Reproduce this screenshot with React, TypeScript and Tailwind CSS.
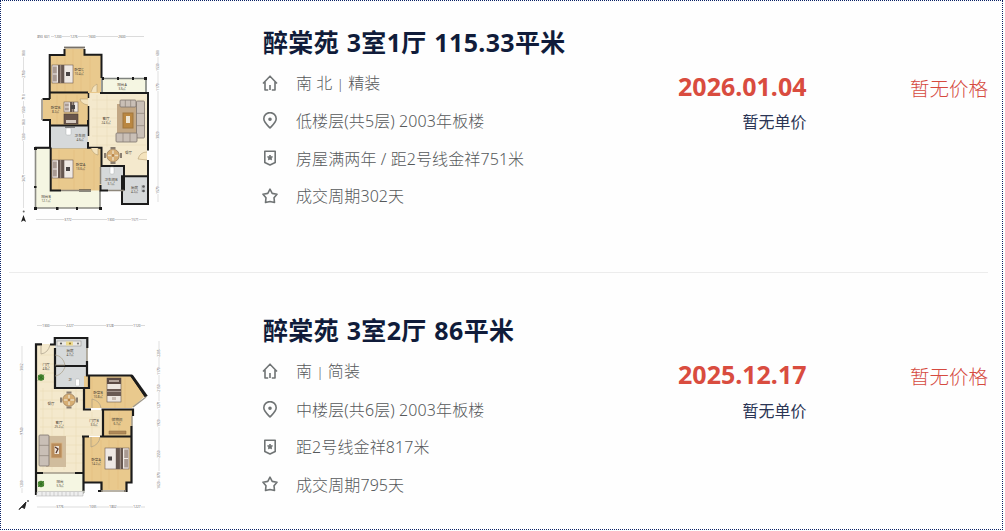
import type { ReactNode } from "react";

interface Listing { id: number; title: string; orient: string; decor: string; floor: string; tag: string; cycle: string; date: string; plan: ReactNode }

const WALL = "#1b1b1b";
const WOOD = "#e9c98d";
const TILE = "#d6d9da";
const LIVING = "#f4e9cd";
const BALCONY = "#f5f6e2";

function Label({ x, y, name, area }: { x: number; y: number; name: string; area: string }) {
  return (
    <g fontSize="3.6" fill="#4b4336" textAnchor="middle">
      <text x={x} y={y}>{name}</text>
      <text x={x} y={y + 4} fontSize="3">{area}</text>
    </g>
  );
}

function Bed({ x, y, w = 21, h = 18, flip = false }: { x: number; y: number; w?: number; h?: number; flip?: boolean }) {
  return (
    <g transform={flip ? `translate(${2 * x + w} 0) scale(-1 1)` : undefined}>
      <rect x={x} y={y} width={w} height={h} fill="#efe9e4" stroke="#6f5c50" strokeWidth="0.6" />
      <rect x={x + 0.8} y={y + 1.5} width={4} height={h / 2 - 2} fill="#a99a92" />
      <rect x={x + 0.8} y={y + h / 2 + 0.5} width={4} height={h / 2 - 2} fill="#a99a92" />
      <rect x={x + 6} y={y} width={w * 0.3} height={h} fill="#665750" />
      <rect x={x + 8} y={y} width={1.2} height={h} fill="#9b8b82" />
      <rect x={x + w - 7} y={y + h / 2 - 2} width={4} height={4} fill="#4a4545" />
    </g>
  );
}

function Sofa({ x, y, w, h }: { x: number; y: number; w: number; h: number }) {
  const tall = h > w;
  return (
    <g>
      <rect x={x} y={y} width={w} height={h} rx="1" fill="#c9bfb6" stroke="#7d746d" strokeWidth="0.8" />
      {[1, 2].map((i) => tall
        ? <path key={i} d={`M${x} ${y + (h * i) / 3}h${w}`} stroke="#8d8279" strokeWidth="0.7" />
        : <path key={i} d={`M${x + (w * i) / 3} ${y}v${h}`} stroke="#8d8279" strokeWidth="0.7" />)}
    </g>
  );
}

function Dining({ x, y }: { x: number; y: number }) {
  return (
    <g>
      <path d={`M${x - 2.5} ${y - 7.5}h5M${x - 2.5} ${y + 7.5}h5M${x - 8} ${y - 2.5}v5M${x + 8} ${y - 2.5}v5`} stroke="#8a7e70" strokeWidth="2" />
      <circle cx={x} cy={y} r="6.3" fill="#d6ad72" stroke="#94795a" strokeWidth="0.7" />
      <path d={`M${x - 5} ${y}h10M${x} ${y - 5}v10`} stroke="#e9d9bb" strokeWidth="1.6" />
      <circle cx={x} cy={y} r="1.4" fill="#b68143" />
    </g>
  );
}

// dimension line with small gaps where the measures stand
function HDim({ y, from, to, marks }: { y: number; from: number; to: number; marks: [number, string][] }) {
  return (
    <g>
      <path d={`M${from} ${y}H${to}`} stroke="#b9b9b9" strokeWidth="0.5" />
      {marks.map(([x, t]) => (
        <g key={x}>
          <rect x={x - 4} y={y - 1.5} width="8" height="3" fill="#fefefe" />
          <text x={x} y={y + 1.2} fontSize="3.2" textAnchor="middle" fill="#666">{t}</text>
        </g>
      ))}
    </g>
  );
}

function VDim({ x, from, to, marks }: { x: number; from: number; to: number; marks: [number, string][] }) {
  return (
    <g>
      <path d={`M${x} ${from}V${to}`} stroke="#c2c2c2" strokeWidth="0.5" />
      {marks.map(([y, t]) => (
        <g key={y} transform={`rotate(-90 ${x} ${y})`}>
          <rect x={x - 4} y={y - 1.5} width="8" height="3" fill="#fefefe" />
          <text x={x} y={y + 1.2} fontSize="3.2" textAnchor="middle" fill="#666">{t}</text>
        </g>
      ))}
    </g>
  );
}

function PlanA() {
  return (
    <svg viewBox="10 24 160 206" className="h-[206px] w-[160px] shrink-0">
      <HDim y={36.5} from={38} to={144} marks={[[40, "890"], [47, "601"], [58, "1200"], [74, "1276"], [92, "1600"], [122, "2600"]]} />
      <HDim y={219.5} from={36} to={147} marks={[[68, "3772"], [111, "1300"], [135, "1571"]]} />
      <VDim x={23.5} from={50} to={208} marks={[[53, "800"], [74, "2700"], [97, "710"], [110, "1500"], [122, "860"], [137, "1200"], [178, "3671"]]} />
      <VDim x={158} from={50} to={202} marks={[[53, "680"], [67, "1530"], [87, "1170"], [135, "3820"], [190, "1570"]]} />
      {/* balconies */}
      <path d="M35.5 148H100v60H35.5z" fill={BALCONY} stroke="#8b8b84" strokeWidth="1.6" />
      <path d="M102 78.5H146V93H102z" fill={BALCONY} stroke="#7f837e" strokeWidth="1.6" />
      {/* rooms */}
      <path d="M65 48.5H84V55H101V93H50V55H65z" fill={WOOD} />
      <path d="M50 93H88V125H50V120H43V99H50z" fill={WOOD} />
      <path d="M88 93H147V176H124V166H101V148H88z" fill={LIVING} />
      <path d="M51 126H88V148H51z" fill={TILE} />
      <path d="M51 148.5H101V190.5H51z" fill={WOOD} />
      <path d="M101 167H124V190H101zM123 177H147V203H123z" fill={TILE} />
      <path d="M57 57V92M65 49V92M73 49V92M81 49V92M90 57V92M57 95V124M66 95V124M77 95V124M59 150V190M74 150V190M84 150V190M94 150V190" stroke="#d9ad67" strokeWidth="0.4" opacity="0.6" />
      <path d="M92 100H146M92 109H146M92 118H146M92 127H146M92 136H146M92 145H146M97 95V147M107 95V147" stroke="#e6d7b4" strokeWidth="0.4" />
      {/* walls */}
      <path d="M64.5 49V55H49.7V92.5H88M84.5 49V54.7H101.5V78M49.7 92V99M42.5 99H50M42.5 120H50V147.8H35M100 93H148V150.5M148 160V204H122V176.3H148M50.7 147.5V190.5H61M79 190.5H91M88 142V147.7H101.5V166H124V190.5M100.5 185V190.5H108M50 125.5H88V120" fill="none" stroke={WALL} strokeWidth="2" />
      <path d="M64 47.5H85" stroke="#77716a" strokeWidth="1.8" />
      <path d="M42 99V120M61 190.5H91M100.5 167V184M108 190.5H124" stroke="#8e877b" strokeWidth="1.5" />
      <path d="M88.5 93V98M88.5 106V136" stroke={WALL} strokeWidth="1.5" />
      <path d="M34 147H37V150H34zM34 207H37V210H34zM56 207H58.5V210H56zM76 207H78V210H76zM99 207H102V210H99zM34 186H36.5V188H34zM102 77H104V80H102zM117 77H119V80H117zM132 77H134V80H132zM144 77H147V80H144z" fill={WALL} />
      <path d="M97 92V84Q92 86 91 92M88 99H80Q81 104 88 105M98 148V155Q93 154 91 148M147 152Q140 152 138 159L147 160" fill="#f4e3bd" stroke="#b69d72" strokeWidth="0.6" />
      <Bed x={52} y={65} />
      <Bed x={52} y={160} />
      <Bed x={64} y={102} w={14} h={10} />
      <rect x={64} y={114} width={14} height={10} fill="#69554b" stroke="#4b3d36" strokeWidth="0.6" />
      <rect x={66} y={120} width={10} height={3} fill="#d4c9bf" />
      <rect x={117} y={104} width={25} height={34} fill="#c2a784" />
      <Sofa x={120} y={100} w={16} h={7} />
      <Sofa x={136.5} y={101} w={8} h={37} />
      <Sofa x={116} y={133} w={21} h={9} />
      <rect x={123} y={113} width={10} height={15} fill="#ba8741" stroke="#a0763d" strokeWidth="1" />
      <rect x={126} y={116} width={4} height={7} fill="#eee5d1" />
      <Dining x={113} y={155.5} />
      <rect x={66} y={128} width={5} height={7} rx="1" fill="#fff" stroke="#a0a4a5" strokeWidth="0.4" />
      <path d="M65 127H75" stroke="#666" strokeWidth="1.5" />
      <rect x={110} y={167} width={4} height={7} rx="1" fill="#fff" stroke="#a0a4a5" strokeWidth="0.4" />
      <path d="M141 185h4v7h-4z" fill="#c3c7c9" /><circle cx="143.5" cy="186.5" r="1.3" fill="#59595a" /><circle cx="143.5" cy="191" r="1.3" fill="#59595a" />
      <Label x={79} y={70.5} name="卧室C" area="10.4㎡" />
      <Label x={55.5} y={108.5} name="卧室B" area="8.2㎡" />
      <Label x={122} y={85.5} name="阳台A" area="3.6㎡" />
      <Label x={106} y={120} name="客厅" area="24.3㎡" />
      <Label x={80} y={136.5} name="卫生间" area="4.6㎡" />
      <Label x={80.5} y={166} name="卧室A" area="13.6㎡" />
      <Label x={111} y={181} name="卫生间B" area="3.1㎡" />
      <Label x={134.5} y={188.5} name="厨房" area="4.2㎡" />
      <Label x={46} y={198} name="阳台B" area="12.1㎡" />
      <text x="128.5" y="154" fontSize="3.5" textAnchor="middle" fill="#4b4336">餐厅</text>
      <path d="M23.5 215L26 222L23.5 220.5L21 222z" fill="#222" /><circle cx="23.7" cy="211.5" r="1" fill="#666" />
    </svg>
  );
}

function PlanB() {
  return (
    <svg viewBox="10 312 160 206" className="h-[206px] w-[160px] shrink-0">
      <HDim y={325.5} from={37} to={145} marks={[[46, "1300"], [70, "2227"], [110, "3128"], [137, "1120"]]} />
      <HDim y={507} from={37} to={145} marks={[[60, "3776"], [93, "1035"], [113, "1802"], [137, "1227"]]} />
      <VDim x={22} from={346} to={493} marks={[[367, "3062"], [431, "9740"], [484, "1200"]]} />
      <VDim x={159} from={341} to={488} marks={[[353, "2205"], [371, "1170"], [388, "2150"], [405, "1271"], [423, "1920"], [454, "2550"], [475, "870"], [485, "1020"]]} />
      {/* rooms */}
      <path d="M37 344H55V387H84V410H103V436H84V473H37z" fill={LIVING} />
      <path d="M55 339H87V387H55z" fill={TILE} />
      <path d="M84 376H132L145 396L132 408H84z" fill={WOOD} />
      <path d="M103 409H132V436H103z" fill={WOOD} />
      <path d="M84 437H132V483H126V490H101V483H84z" fill={WOOD} />
      <path d="M37 473H84V492H37z" fill={BALCONY} />
      <path d="M40 355H54M40 364H54M40 373H54M40 382H54M40 391H83M40 400H83M40 409H83M40 418H100M40 427H100M40 436H83M40 445H83M40 454H83M40 463H83M43 388V470M52 388V470M64 388V470M76 388V470M92 412V434" stroke="#e8d8b3" strokeWidth="0.5" />
      <path d="M92 378V408M115 378V408M125 378V408M110 412V435M119 412V435M92 440V482M101 440V489M109 440V489M118 440V489" stroke="#d9ad67" strokeWidth="0.4" opacity="0.6" />
      {/* walls */}
      <path d="M42 344.3H36V495M50 344.5H54.8V338H87.3V348M87 361V375.5H131.5L145.5 396.5M55 366H87M55 348V388H89V376M84 388V409.5H91M101.5 409.5H133V416M103 409V436M131.5 426V482.5H126.5V491H124M83.5 436V491M82 436.5H89M100 436.5H132M84 482.5H101.5V491H98" fill="none" stroke={WALL} strokeWidth="2.2" />
      <path d="M131.5 375.5L146.5 396.5" stroke={WALL} strokeWidth="3" />
      <path d="M36 473H43M75 473H84" stroke={WALL} strokeWidth="1.8" />
      <path d="M87 348V361M132 416V426M101 491H126M43 473H75M146 397L133 407" stroke="#a19989" strokeWidth="1.5" />
      <path d="M36 493H84V490" fill="none" stroke="#8e9189" strokeWidth="1" />
      <path d="M38 491.5H83V496H36" fill="#eee" stroke="#aaa" strokeWidth="0.5" />
      <path d="M42 492V496M46 492V496M50 492V496M54 492V496M58 492V496M62 492V496M66 492V496M70 492V496M74 492V496M78 492V496" stroke="#b5b5b5" strokeWidth="0.6" />
      <path d="M41 345V354Q48 353 50 345M55 355Q63 356 65 365H55M55 376Q62 375 65 367M92 408V399Q100 401 101 408M91 437V447Q99 445 100 437" fill="none" stroke="#a99d86" strokeWidth="0.7" />
      <rect x={57} y={341} width={24} height={5} fill="#eceae5" stroke="#888" strokeWidth="0.5" />
      <rect x={66} y={341.5} width={7} height={4} fill="#eddb91" />
      <circle cx="61" cy="343.5" r="1.1" fill="#555" /><circle cx="70" cy="343.5" r="1.1" fill="#997d2c" /><circle cx="78" cy="343.5" r="1.1" fill="#777" />
      <rect x={75.5} y={379} width={4} height={7} rx="1" fill="#fff" stroke="#a0a4a5" strokeWidth="0.4" />
      <Dining x={69} y={400} />
      <rect x={107} y={378} width={14} height={24} fill="#eee7df" stroke="#6a5a50" strokeWidth="0.6" />
      <rect x={107} y={378} width={14} height={6} fill="#5c4b44" />
      <rect x={109} y={380} width={10} height={2} fill="#b3a49a" />
      <rect x={107} y={389} width={14} height={7} fill="#6a5a53" /><path d="M107 391.5h14" stroke="#a3948c" />
      <rect x={112} y={397} width={4} height={3} fill="#c9bcb2" />
      <Bed x={105} y={448} w={24} h={21} flip />
      <path d="M109 431H126V434H109z" fill="#b18a59" stroke="#8b6b42" strokeWidth="0.5" />
      <rect x={46} y={436} width={20} height={31} fill="#d0bc9d" />
      <Sofa x={39} y={435} w={10} h={31} />
      <rect x={51} y={443} width={11} height={15} fill="#b98c5b" stroke="#d6b587" strokeWidth="0.8" />
      <rect x={54.5} y={446} width={4.5} height={8} fill="#eee4d8" /><path d="M55 447l3 2l-2 4" stroke="#54362d" strokeWidth="1.3" fill="none" />
      {[[41, 377.5], [41, 484]].map(([x, y]) => (
        <g key={y}>
          <circle cx={x} cy={y} r="3.2" fill="#518c38" />
          <path d={`M${x - 3} ${y - 2}l6 4M${x + 3} ${y - 3}l-6 6M${x} ${y - 3}v6`} stroke="#2f6d21" strokeWidth="0.8" />
        </g>
      ))}
      <Label x={70} y={352} name="厨房" area="4.7㎡" />
      <Label x={46} y={365.5} name="门厅" area="4.8㎡" />
      <text x="70" y="380.5" fontSize="3.5" textAnchor="middle" fill="#4b4336">卫</text>
      <text x="51" y="405" fontSize="3.5" textAnchor="middle" fill="#4b4336">餐厅</text>
      <Label x={98} y={394} name="卧室B" area="10.8㎡" />
      <Label x={59} y={424} name="客厅" area="25.2㎡" />
      <Label x={94} y={422} name="门厅B" area="3.0㎡" />
      <Label x={117} y={421} name="储物间" area="6.7㎡" />
      <Label x={96} y={461} name="卧室A" area="14.2㎡" />
      <Label x={60} y={483} name="阳台" area="5.9㎡" />
      <path d="M19 509.5L26 502L24.5 508.5L22 507z" fill="#222" stroke="#222" /><circle cx="28" cy="501" r="1" fill="#555" />
    </svg>
  );
}

const listings: Listing[] = [
  { id: 1, title: "醉棠苑 3室1厅 115.33平米", orient: "南 北", decor: "精装", floor: "低楼层(共5层) 2003年板楼", tag: "房屋满两年 / 距2号线金祥751米", cycle: "成交周期302天", date: "2026.01.04", plan: <PlanA /> },
  { id: 2, title: "醉棠苑 3室2厅 86平米", orient: "南", decor: "简装", floor: "中楼层(共6层) 2003年板楼", tag: "距2号线金祥817米", cycle: "成交周期795天", date: "2025.12.17", plan: <PlanB /> },
];

const icons = {
  house: <path d="M1 8.5L8 1.2L15 8.500M3 7V15H6.2M13 7V15H9.8M8 10V15" />,
  pin: <><path d="M8 16C5.5 13.3 1.8 10.2 1.8 6.8A6.2 6.2 0 0 1 14.2 6.8C14.2 10.2 10.5 13.3 8 16z" /><circle cx="8" cy="7.3" r="1" fill="#707475" /></>,
  badge: <><path d="M2.8 1.2H13.2V12.5L8 15L2.8 12.5z" /><path d="M8 5L8.7 6.7L10.5 6.9L9.2 8.1L9.5 9.8L8 8.9L6.5 9.8L6.8 8.1L5.5 6.9L7.3 6.7z" fill="#707475" strokeWidth="1" /></>,
  star: <path d="M8 1.2L10.2 5.4L15 6.2L12 9.7L12.5 14.5L8 13.5L3.5 14.5L4 9.7L1 6.2L5.8 5.4z" />,
};

function Info({ icon, children }: { icon: ReactNode; children: ReactNode }) {
  return (
    <li className="flex h-[37.7px] items-center">
      <svg viewBox="0 0 16 17" className="mr-[18px] h-[17px] w-4 shrink-0" fill="none" stroke="#707475" strokeWidth="1.6" strokeLinejoin="round">{icon}</svg>
      <span className="whitespace-nowrap">{children}</span>
    </li>
  );
}

export default function App() {
  return (
    <div className="h-[531px] w-[1005px] overflow-hidden bg-[#fefefe] font-['Noto_Sans','Noto_Sans_CJK_SC',sans-serif]">
      <ul className="h-[530px] w-[1003px] border border-dotted border-[#0b2265] pr-[14px] pl-2">
        {listings.map((l) => (
          <li key={l.id} className="group flex h-[272px] border-b border-[#ececec] pt-[23px] last:h-[256px] last:border-b-0 last:pt-[39px]">
            <div className="w-[161px] shrink-0 pl-px">{l.plan}</div>
            <div className="ml-[92px] w-[360px] shrink-0">
              <h2 className="ml-px h-[38px] text-[25px] leading-[37px] font-bold tracking-[0.35px] whitespace-nowrap text-[#101c3a] [word-spacing:0.8px]">{l.title}</h2>
              <ul className="mt-[2.4px] text-base leading-6 font-light tracking-[0.1px] text-[#56595b] group-last:mt-[3px]">
                <Info icon={icons.house}>{l.orient} <span className="text-[13px]">|</span> {l.decor}</Info>
                <Info icon={icons.pin}>{l.floor}</Info>
                <Info icon={icons.badge}>{l.tag}</Info>
                <Info icon={icons.star}>{l.cycle}</Info>
              </ul>
            </div>
            <div className="w-[184.5px] shrink-0 pt-[45px] text-right">
              <div className="text-[25px] leading-[34px] font-bold text-[#d94c3f]">{l.date}</div>
              <div className="mt-[7px] text-base leading-6 text-[#2b3555] group-last:mt-[8px]">暂无单价</div>
            </div>
            <div className="flex-1 pt-[50px] text-right text-[19.5px] leading-[30px] font-light text-[#d54a3f]">暂无价格</div>
          </li>
        ))}
      </ul>
    </div>
  );
}
